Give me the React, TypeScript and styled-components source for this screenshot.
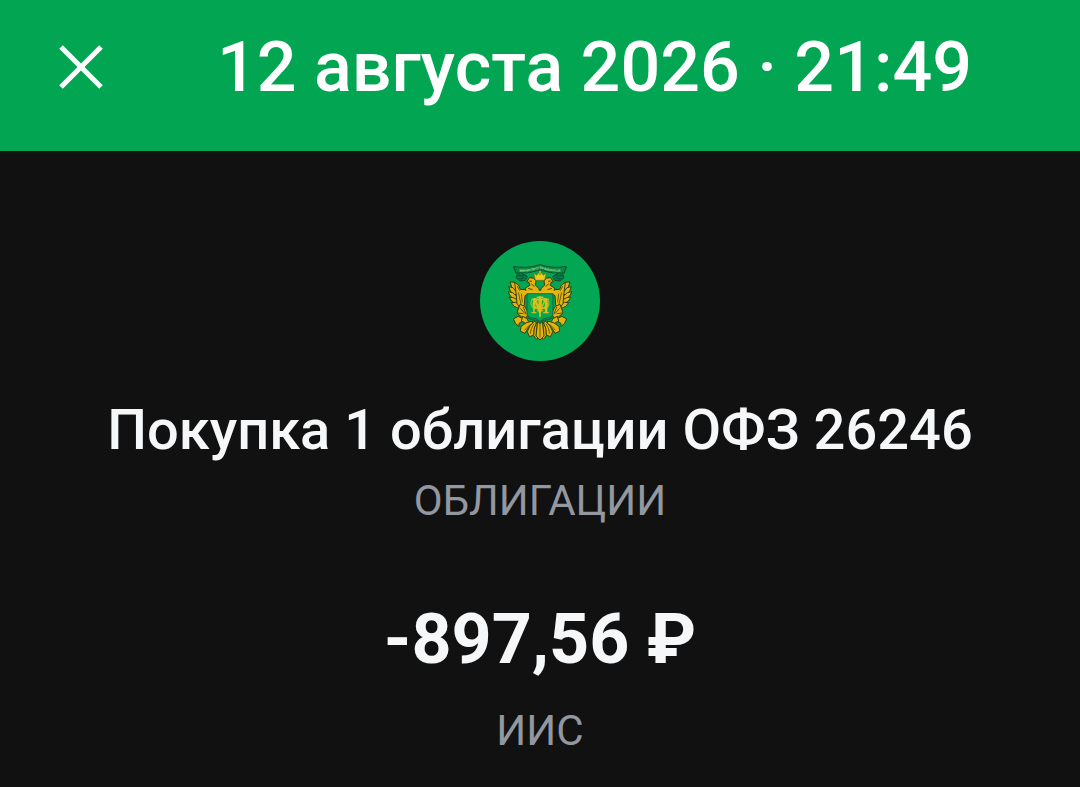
import React from 'react'
import styled, { createGlobalStyle } from 'styled-components'

const GlobalStyle = createGlobalStyle`
  body {
    margin: 0;
    background: #111111;
    font-family: Roboto, 'Noto Sans', sans-serif;
  }
`

const Header = styled.header`
  display: flex;
  align-items: center;
  padding: 25px 0 42px 53px;
  background: #01a552;
`

const CloseButton = styled.button`
  flex: none;
  display: flex;
  align-items: center;
  justify-content: center;
  width: 56px;
  height: 56px;
  padding: 0;
  border: 0;
  background: none;
  color: #ffffff;
  cursor: pointer;
`

const DateTitle = styled.h1`
  flex: 1;
  margin: 0;
  color: #ffffff;
  font-size: 70px;
  font-weight: 500;
  line-height: 84px;
  text-align: center;
`

const Operation = styled.main`
  display: flex;
  flex-direction: column;
  align-items: center;
  padding: 90px 24px 24px;
  text-align: center;
`

const Emblem = styled.svg`
  width: 120px;
  height: 120px;
`

const Name = styled.h2`
  margin: 35px 0 11px;
  color: #f6f7f8;
  font-size: 56px;
  font-weight: 500;
  line-height: 68px;
`

const Amount = styled.p`
  margin: 70px 0 24px;
  color: #f6f7f8;
  font-size: 70px;
  font-weight: 700;
  line-height: 84px;
`

const Caption = styled.p`
  margin: 0;
  color: #9297a0;
  font-size: 42px;
  line-height: 52px;
`

const CloseIcon = () => (
  <svg width="44" height="44" viewBox="0 0 44 44" aria-hidden="true">
    <path d="M2 2L42 42M42 2L2 42" stroke="currentColor" strokeWidth="5" />
  </svg>
)

// Left half of the eagle, mirrored for the right one
const EagleHalf = () => (
  <g stroke="#34400f" strokeWidth="3" strokeLinejoin="round" fill="#e3b310">
    {/* ribbon end */}
    <path d="M130 108l20 8 6 12 16 8-6 12-16 2-12-10 4-10z" fill="#087a45" stroke="#0a4f30" />
    <path d="M144 133q12 4 20-2M148 143q8 2 14-4" fill="none" stroke="#0a4f30" />
    {/* wing feathers */}
    <path d="M120 153l16 1 10 22-10 4q-14-12-16-27z" />
    <path d="M116 167l13 3 14 18-10 4q-15-10-17-25z" />
    <path d="M115 182l13 3 16 14-8 7q-17-8-21-24z" />
    <path d="M117 198l13 2 16 9-6 10q-17-5-23-21z" />
    <path d="M124 215l12-1 14 4-4 14q-16-3-22-17z" />
    <path d="M134 154q14 5 17 21l22 1v14l-8 4-2 28-12 10-10-14q-2-30-7-64z" />
    <path d="M145 184l8 36M154 188l3 26M142 166l8 14" fill="none" stroke="#6b5c0e" />
    {/* head and neck */}
    <path d="M170 153l8-13 12 1 8 9-2 12 10 10 4 12h-36q-10-3-8-13l14-8-4-10z" />
    <path d="M178 150l8 1M184 158l9 9M174 172l14 4" fill="none" stroke="#4f4b10" />
    {/* leg with the torch */}
    <path d="M150 220l14 6 11 20-6 14-14-2-14-12z" />
    <path d="M151 232l14 16M160 228l8 22M144 246l16 2" fill="none" stroke="#5d550f" />
    <path d="M130 264l14-8 14 6-2 10-8 4-2 10-9-8z" />
    <path d="M158 256l12 6 6 10-8 6-14-8z" />
    {/* tail feathers */}
    <path d="M188 270q-20 2-35 16l-2 15 14 6q8-18 22-27z" />
    <path d="M194 270q-18 14-22 32l6 15 12-4q2-22 9-37z" />
    <path d="M203 270q-14 20-12 44l9 11 8-8q-2-24 1-44z" />
    <path d="M164 298q8-12 20-19M181 308q2-18 11-30M199 316q-2-22 4-38" fill="none" stroke="#6b5c0e" />
  </g>
)

const MinistryEmblem = () => (
  <Emblem viewBox="30 30 360 360" role="img" aria-label="Министерство финансов">
    <circle cx="210" cy="210" r="180" fill="#03a653" />
    <EagleHalf />
    <g transform="matrix(-1 0 0 1 420 0)">
      <EagleHalf />
    </g>
    <path d="M203 270h14l5 45-12 12-12-12z" fill="#e3b310" stroke="#34400f" strokeWidth="3" />
    <path d="M210 278v42" stroke="#6b5c0e" strokeWidth="3" />
    {/* ribbon */}
    <path
      d="M132 106q35 8 78-5q43 13 78 5l-5 20q-37 4-73-9q-36 13-73 9z"
      fill="#07894a"
      stroke="#0a5533"
      strokeWidth="3"
    />
    <path id="motto" d="M136 122q38 3 74-10q36 13 74 10" fill="none" />
    <text fill="#b3d984" fontSize="9" fontWeight="700" textAnchor="middle">
      <textPath href="#motto" startOffset="50%">
        МИНИСТЕРСТВО ФИНАНСОВ
      </textPath>
    </text>
    {/* crown */}
    <path
      d="M196 148l-5-23 9 8 5-8 5 6 5-6 5 8 9-8-5 23z"
      fill="#f5c81a"
      stroke="#6a6a12"
      strokeWidth="2"
    />
    <path d="M210 119v10" stroke="#e6b812" strokeWidth="4" />
    {/* shield */}
    <path
      d="M171 188h78v58q0 12-14 14l-17 5-8 7-8-7-17-5q-14-2-14-14z"
      fill="#03a653"
      stroke="#176337"
      strokeWidth="3"
    />
    <path d="M164 183h92" stroke="#e6b812" strokeWidth="7" />
    <g
      fill="#dcc01b"
      stroke="#dcc01b"
      fontFamily="'Liberation Serif', serif"
      fontSize="62"
      textAnchor="middle"
    >
      <text x="210" y="240">
        Ф
      </text>
      <text x="210" y="246">
        М
      </text>
    </g>
    {/* loops and staff of the monogram */}
    <ellipse cx="195" cy="217" rx="12" ry="15" fill="none" stroke="#dcc01b" strokeWidth="3" />
    <ellipse cx="225" cy="217" rx="12" ry="15" fill="none" stroke="#dcc01b" strokeWidth="3" />
    <path d="M210 196v62M200 200h20" stroke="#dcc01b" strokeWidth="5" />
    <path d="M172 260q14 8 28 9l10 8 10-8q14-1 28-9" fill="none" stroke="#17633d" strokeWidth="4" />
  </Emblem>
)

export default function App() {
  return (
    <>
      <GlobalStyle />
      <Header>
        <CloseButton type="button" aria-label="Закрыть">
          <CloseIcon />
        </CloseButton>
        <DateTitle>12 августа 2026 · 21:49</DateTitle>
      </Header>
      <Operation>
        <MinistryEmblem />
        <Name>Покупка 1 облигации ОФЗ 26246</Name>
        <Caption>ОБЛИГАЦИИ</Caption>
        <Amount>-897,56 ₽</Amount>
        <Caption>ИИС</Caption>
      </Operation>
    </>
  )
}
